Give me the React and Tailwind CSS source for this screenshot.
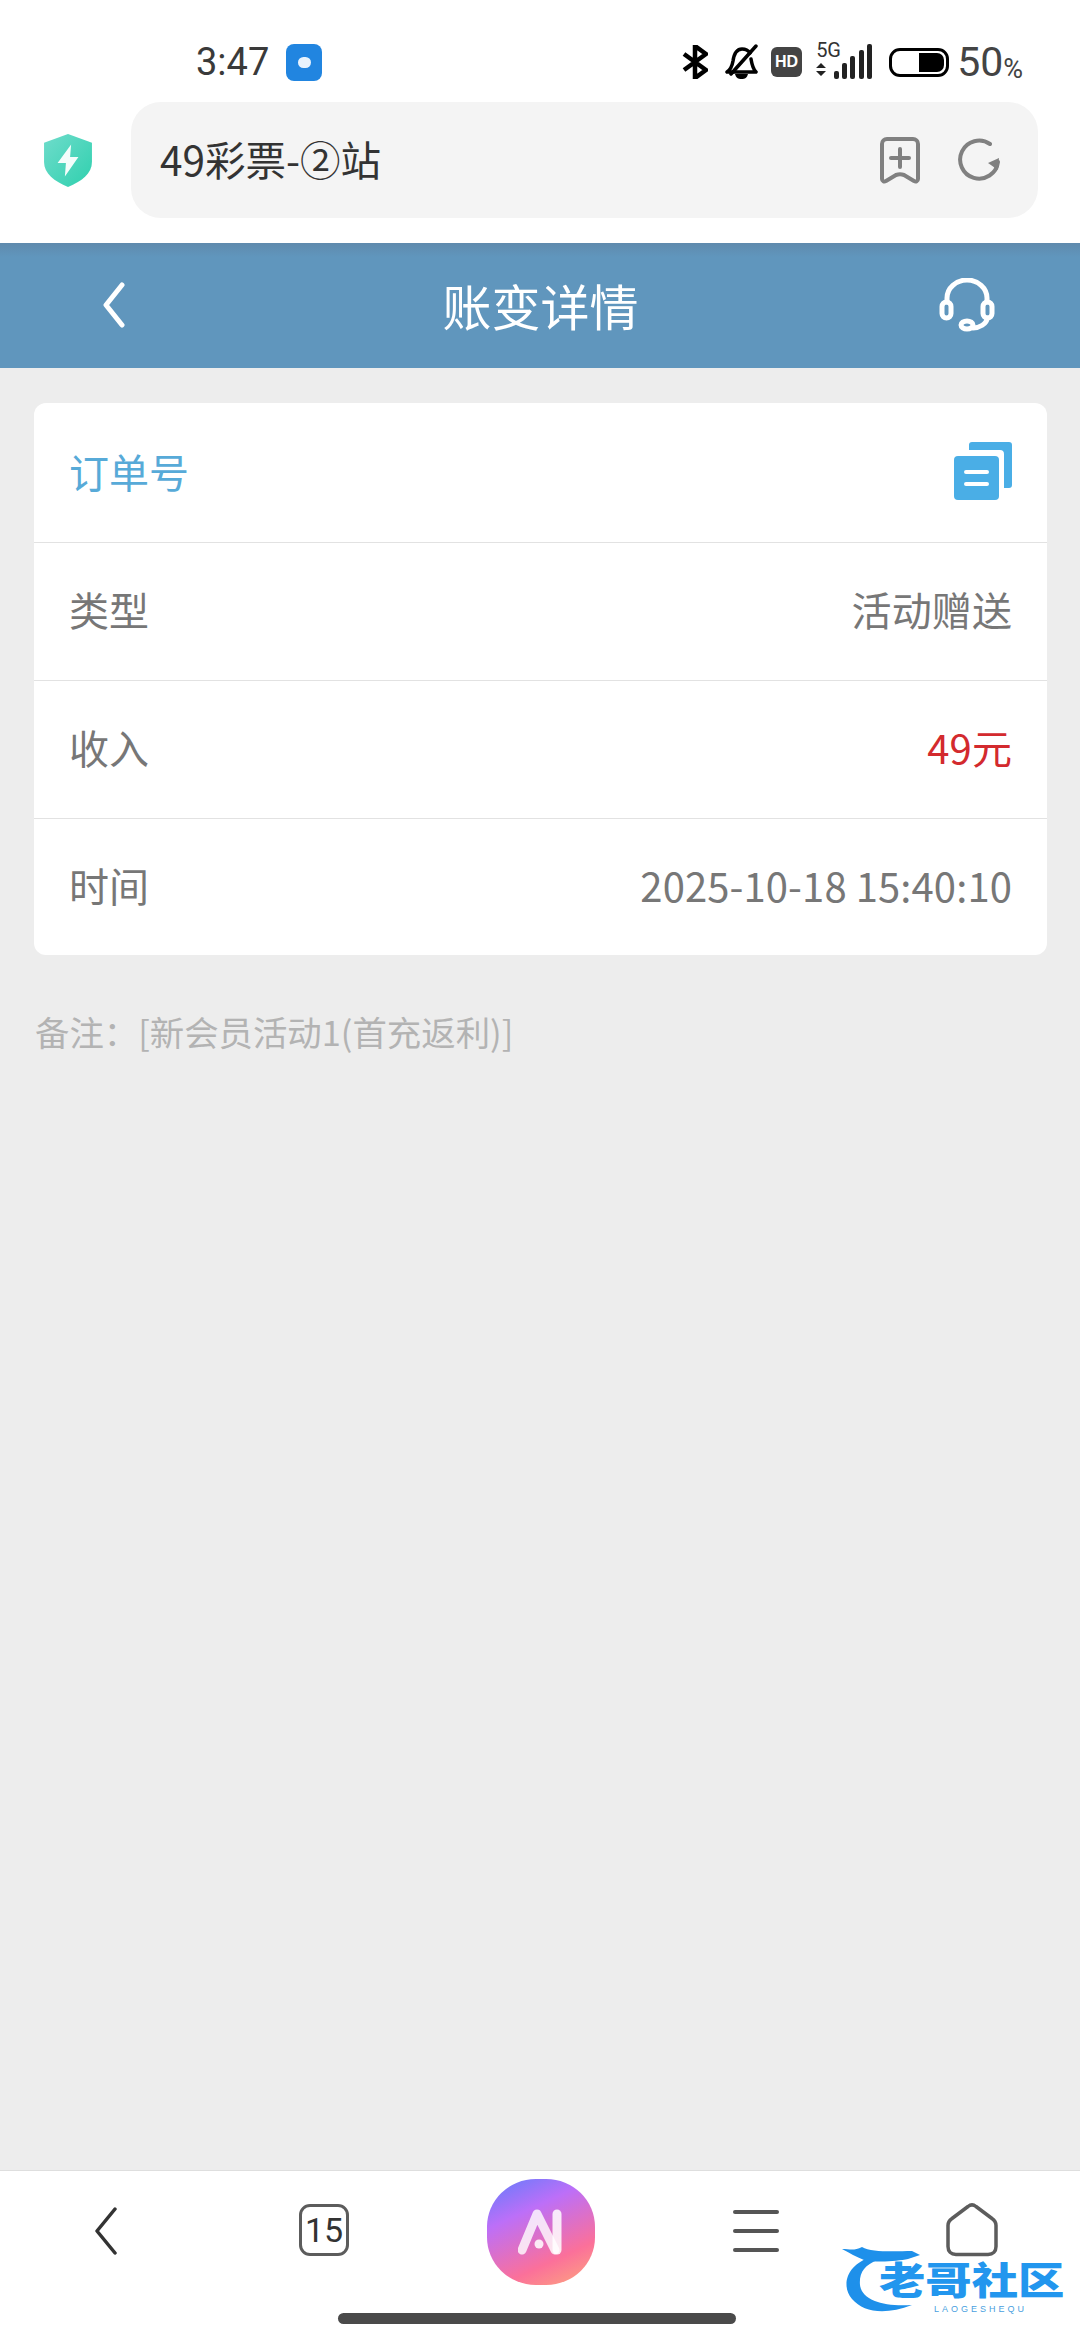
const cjk = "font-['Noto_Sans_CJK_SC','Noto_Sans',sans-serif]";

const BellOff = () => (
  <svg width="34" height="36" viewBox="0 0 34 36" fill="none" stroke="#000" strokeWidth="3.500" strokeLinecap="round" strokeLinejoin="round">
    <path d="M3 28c3-2 5-5 6-11 1-7 4-12 9-12 3 0 6 1 8 4M27 15c1 6 2 10 5 13H3" />
    <path d="M32 2 7 30" />
    <path d="M11 30h13c-1 4-3 5-6.500 5S12 34 11 30z" fill="#000" stroke="none" />
  </svg>
);

const Signal = () => (
  <div className="relative w-[56px] h-[36px]">
    <span className="absolute left-0 top-[-5px] text-[20px] leading-[22px] text-[#333] font-['Roboto',sans-serif]">5G</span>
    <svg className="absolute left-0 top-0" width="56" height="36" viewBox="0 0 56 36" fill="#222">
      <path d="M0 24l5-5 5 5zM0 27l5 5 5-5z" />
      <rect x="18" y="27" width="5" height="8" rx="2" />
      <rect x="26" y="19" width="5" height="16" rx="2" />
      <rect x="34" y="12" width="5" height="23" rx="2" />
      <rect x="43" y="6" width="5" height="29" rx="2" />
      <rect x="51" y="0" width="5" height="35" rx="2" />
    </svg>
  </div>
);

const StatusBar = () => (
  <div className="h-[102px] flex items-center pl-[196px] pr-[57px] pt-[22px] bg-white">
    <span className="text-[38px] leading-none text-[#3a3a3a] font-['Roboto',sans-serif]">3:47</span>
    <div className="ml-[17px] w-[36px] h-[37px] rounded-[8px] bg-[#2185e0] flex items-center justify-center">
      <div className="w-[13px] h-[11px] rounded-full bg-[#e8f3fd]" />
    </div>
    <div className="ml-auto flex items-center">
      <svg width="26" height="34" viewBox="0 0 26 34" fill="none" stroke="#000" strokeWidth="4.500">
        <path d="M2 9l22 16-11 8V1l11 8L2 25" />
      </svg>
      <div className="ml-[16px]"><BellOff /></div>
      <div className="ml-[13px] w-[31px] h-[30px] rounded-[6px] bg-[#444] flex items-center justify-center text-[16px] font-bold text-white font-['Liberation_Sans',sans-serif]">HD</div>
      <div className="ml-[14px]"><Signal /></div>
      <div className="ml-[17px] w-[60px] h-[29px] rounded-[11px] border-[3px] border-black p-[2px] flex justify-end">
        <div className="w-[25px] h-full bg-black rounded-r-[7px]" />
      </div>
      <span className="ml-[8px] text-[41px] leading-none text-[#444] font-['Roboto',sans-serif]">50</span>
      <span className="text-[27px] leading-none self-end text-[#444] font-['Roboto',sans-serif]">%</span>
    </div>
  </div>
);

const AddressBar = () => (
  <div className="h-[116px] flex items-center bg-white">
    <div className="w-[131px] flex justify-center pl-[4px]">
      <svg width="50" height="55" viewBox="0 0 48 57" preserveAspectRatio="none">
        <defs>
          <linearGradient id="sh" x1="0" y1="0" x2="1" y2="1">
            <stop offset="0" stopColor="#6fdccb" />
            <stop offset="1" stopColor="#2fd0ae" />
          </linearGradient>
        </defs>
        <path d="M24 1 47 10v20c0 12-10 20-23 26C11 50 1 42 1 30V10z" fill="url(#sh)" />
        <path d="M27 12 14 31h8l-1 14 13-20h-8z" fill="#f4fdfb" />
      </svg>
    </div>
    <div className="w-[907px] h-full rounded-[30px] bg-[#f4f4f4] flex items-center pl-[29px] pr-[37px]">
      <span className={`text-[40.5px] leading-none text-[#333] pb-[2px] ${cjk}`}>49彩票-②站</span>
      <svg className="ml-auto" width="42" height="48" viewBox="0 0 42 48" fill="none" stroke="#808080" strokeWidth="4" strokeLinecap="round" strokeLinejoin="round">
        <path d="M8 3h26a5 5 0 0 1 5 5v35c0 2-2 3-4 2l-10-6c-3-1-5-1-8 0L7 45c-2 1-4 0-4-2V8a5 5 0 0 1 5-5z" />
        <path d="M21 13v18M12 22h18" />
      </svg>
      <svg className="ml-[36px]" width="44" height="44" viewBox="0 0 44 44" fill="none">
        <path d="M41 24A19 19 0 1 1 33 6" stroke="#808080" strokeWidth="4" strokeLinecap="round" />
        <path d="M42 20 41 32l-10-7z" fill="#808080" />
      </svg>
    </div>
  </div>
);

const Header = () => (
  <div className="h-[125px] bg-[linear-gradient(#5f8aad,#6096bd_14px)] grid grid-cols-[1fr_auto_1fr] items-center pl-[102px] pr-[85px] pb-[2px]">
    <svg width="24" height="46" viewBox="0 0 24 46" fill="none" stroke="#fff" strokeWidth="5" strokeLinecap="round" strokeLinejoin="round">
      <path d="M20 3 4 23l16 20" />
    </svg>
    <span className={`text-[49px] leading-none text-white ${cjk} relative left-[-8px]`}>账变详情</span>
    <svg className="justify-self-end" width="56" height="54" viewBox="0 0 56 54" fill="none" stroke="#fff" strokeWidth="5" strokeLinecap="round">
      <path d="M8 24v-4a20 18 0 0 1 40 0v4" />
      <rect x="3" y="24" width="9" height="16" rx="4.500" />
      <rect x="44" y="24" width="9" height="16" rx="4.500" />
      <path d="M48 40c0 6-8 10-14 10" />
      <ellipse cx="28" cy="47" rx="6" ry="4" />
    </svg>
  </div>
);

const Row = ({ label, value, valueClass = 'text-[#777]', last }) => (
  <div className={`flex items-center justify-between pl-[35px] pr-[35px] pb-[5px] ${last ? 'h-[136px]' : 'h-[138px] border-b border-[#e2e2e2]'}`}>
    <span className="text-[40px] leading-none text-[#777]">{label}</span>
    <span className={`text-[40px] leading-none tracking-[0.1px] ${valueClass}`}>{value}</span>
  </div>
);

const DetailCard = () => (
  <div className={`ml-[34px] mr-[33px] mt-[35px] rounded-[12px] bg-white ${cjk}`}>
    <div className="h-[140px] flex items-center justify-between pl-[35px] pr-[35px] pb-[3px] border-b border-[#e2e2e2]">
      <span className="text-[40px] leading-none text-[#57aad8]">订单号</span>
      <svg width="58" height="58" viewBox="0 0 58 58">
        <path d="M15 3a3 3 0 0 1 3-3h37a3 3 0 0 1 3 3v40a3 3 0 0 1-3 3h-5V12a4 4 0 0 0-4-4H15z" fill="#4aaee6" />
        <rect x="0" y="14" width="45" height="44" rx="4" fill="#4aaee6" />
        <path d="M12 30h21M12 42h21" stroke="#fff" strokeWidth="4" strokeLinecap="round" />
      </svg>
    </div>
    <Row label="类型" value="活动赠送" />
    <Row label="收入" value="49元" valueClass="text-[#d32a2e]" />
    <Row label="时间" value="2025-10-18 15:40:10" last />
  </div>
);

const BottomNav = () => (
  <div className="h-[170px] bg-white border-t border-[#dedede] relative">
    <div className="grid grid-cols-5 h-[118px] items-center">
      <div className="flex justify-center pr-[4px] pt-[2px]">
        <svg width="24" height="48" viewBox="0 0 24 48" fill="none" stroke="#333" strokeWidth="3.500" strokeLinecap="round" strokeLinejoin="round">
          <path d="M21 2 3 24l18 22" />
        </svg>
      </div>
      <div className="flex justify-center">
        <div className="w-[50px] h-[52px] rounded-[11px] border-[3.5px] border-[#5c5c5c] flex items-center justify-center text-[34px] leading-none text-[#333] font-['Roboto',sans-serif]">15</div>
      </div>
      <div className="flex justify-center pt-[4px] pl-[2px]">
        <div className="w-[108px] h-[106px] rounded-[45%] bg-[linear-gradient(155deg,#5f7dfb_0%,#bc6ff8_32%,#fb709a_72%,#fda97c_100%)] flex items-center justify-center">
          <svg width="46" height="48" viewBox="0 0 46 48" fill="none" strokeLinecap="round" strokeLinejoin="round">
            <path d="M4 42 19 6l18 36" stroke="#fff" strokeOpacity=".8" strokeWidth="9" />
            <path d="M39 6v36" stroke="#fff" strokeOpacity=".85" strokeWidth="9" />
            <circle cx="21" cy="36" r="4.500" fill="#fff" fillOpacity=".85" />
          </svg>
        </div>
      </div>
      <div className="flex justify-center pt-[2px]">
        <div className="flex flex-col gap-[15px]">
          <div className="w-[46px] h-[4px] rounded-full bg-[#555]" />
          <div className="w-[46px] h-[4px] rounded-full bg-[#555]" />
          <div className="w-[46px] h-[4px] rounded-full bg-[#555]" />
        </div>
      </div>
      <div className="flex justify-center">
        <svg width="52" height="54" viewBox="0 0 52 54" fill="none" stroke="#5c5c5c" strokeWidth="3.500" strokeLinejoin="round">
          <path d="M22 3.500c2.500-2 5.500-2 8 0l16 12c3 2 4 4 4 7v21c0 5-3 8-8 8H10c-5 0-8-3-8-8V22.500c0-3 1-5 4-7z" />
        </svg>
      </div>
    </div>

    {/* home indicator */}
    <div className="absolute left-[338px] top-[142px] w-[398px] h-[11px] rounded-full bg-[#4a4a4a]" />

    {/* watermark */}
    <div className="absolute left-[842px] top-[74px] w-[226px] h-[74px]">
      <svg className="absolute left-0 top-0" width="100" height="72" viewBox="0 0 100 72" fill="none">
        <path d="M30 12C6 18-2 40 10 54c12 14 34 16 60 6C44 62 20 56 18 40 17 28 22 20 36 15z" fill="#1e90ea" />
        <path d="M0 4c8 0 12 2 20-2 10 6 36 4 50 4l8 4-12 4c-10 2-30 4-44 1C14 12 8 8 0 4z" fill="#1e90ea" />
      </svg>
      <span className={`absolute left-[37px] top-[14px] origin-left scale-x-[1.22] text-[38px] leading-none font-black whitespace-nowrap text-[#2296ee] ${cjk}`}>老哥社区</span>
      <span className="absolute left-[92px] top-[60px] text-[9px] leading-none tracking-[3px] text-[#4a9fe0] font-['Liberation_Sans',sans-serif]">LAOGESHEQU</span>
    </div>
  </div>
);

export default function App() {
  return (
    <div className="w-[1080px] h-[2340px] flex flex-col bg-[#ededed] overflow-hidden">
      <div className="bg-white pb-[25px]">
        <StatusBar />
        <AddressBar />
      </div>
      <Header />
      <DetailCard />
      <p className={`mx-[35px] mt-[59px] text-[34.4px] leading-none text-[#b3b3b3] ${cjk}`}>备注：[新会员活动1(首充返利)]</p>
      <div className="mt-auto">
        <BottomNav />
      </div>
    </div>
  );
}
